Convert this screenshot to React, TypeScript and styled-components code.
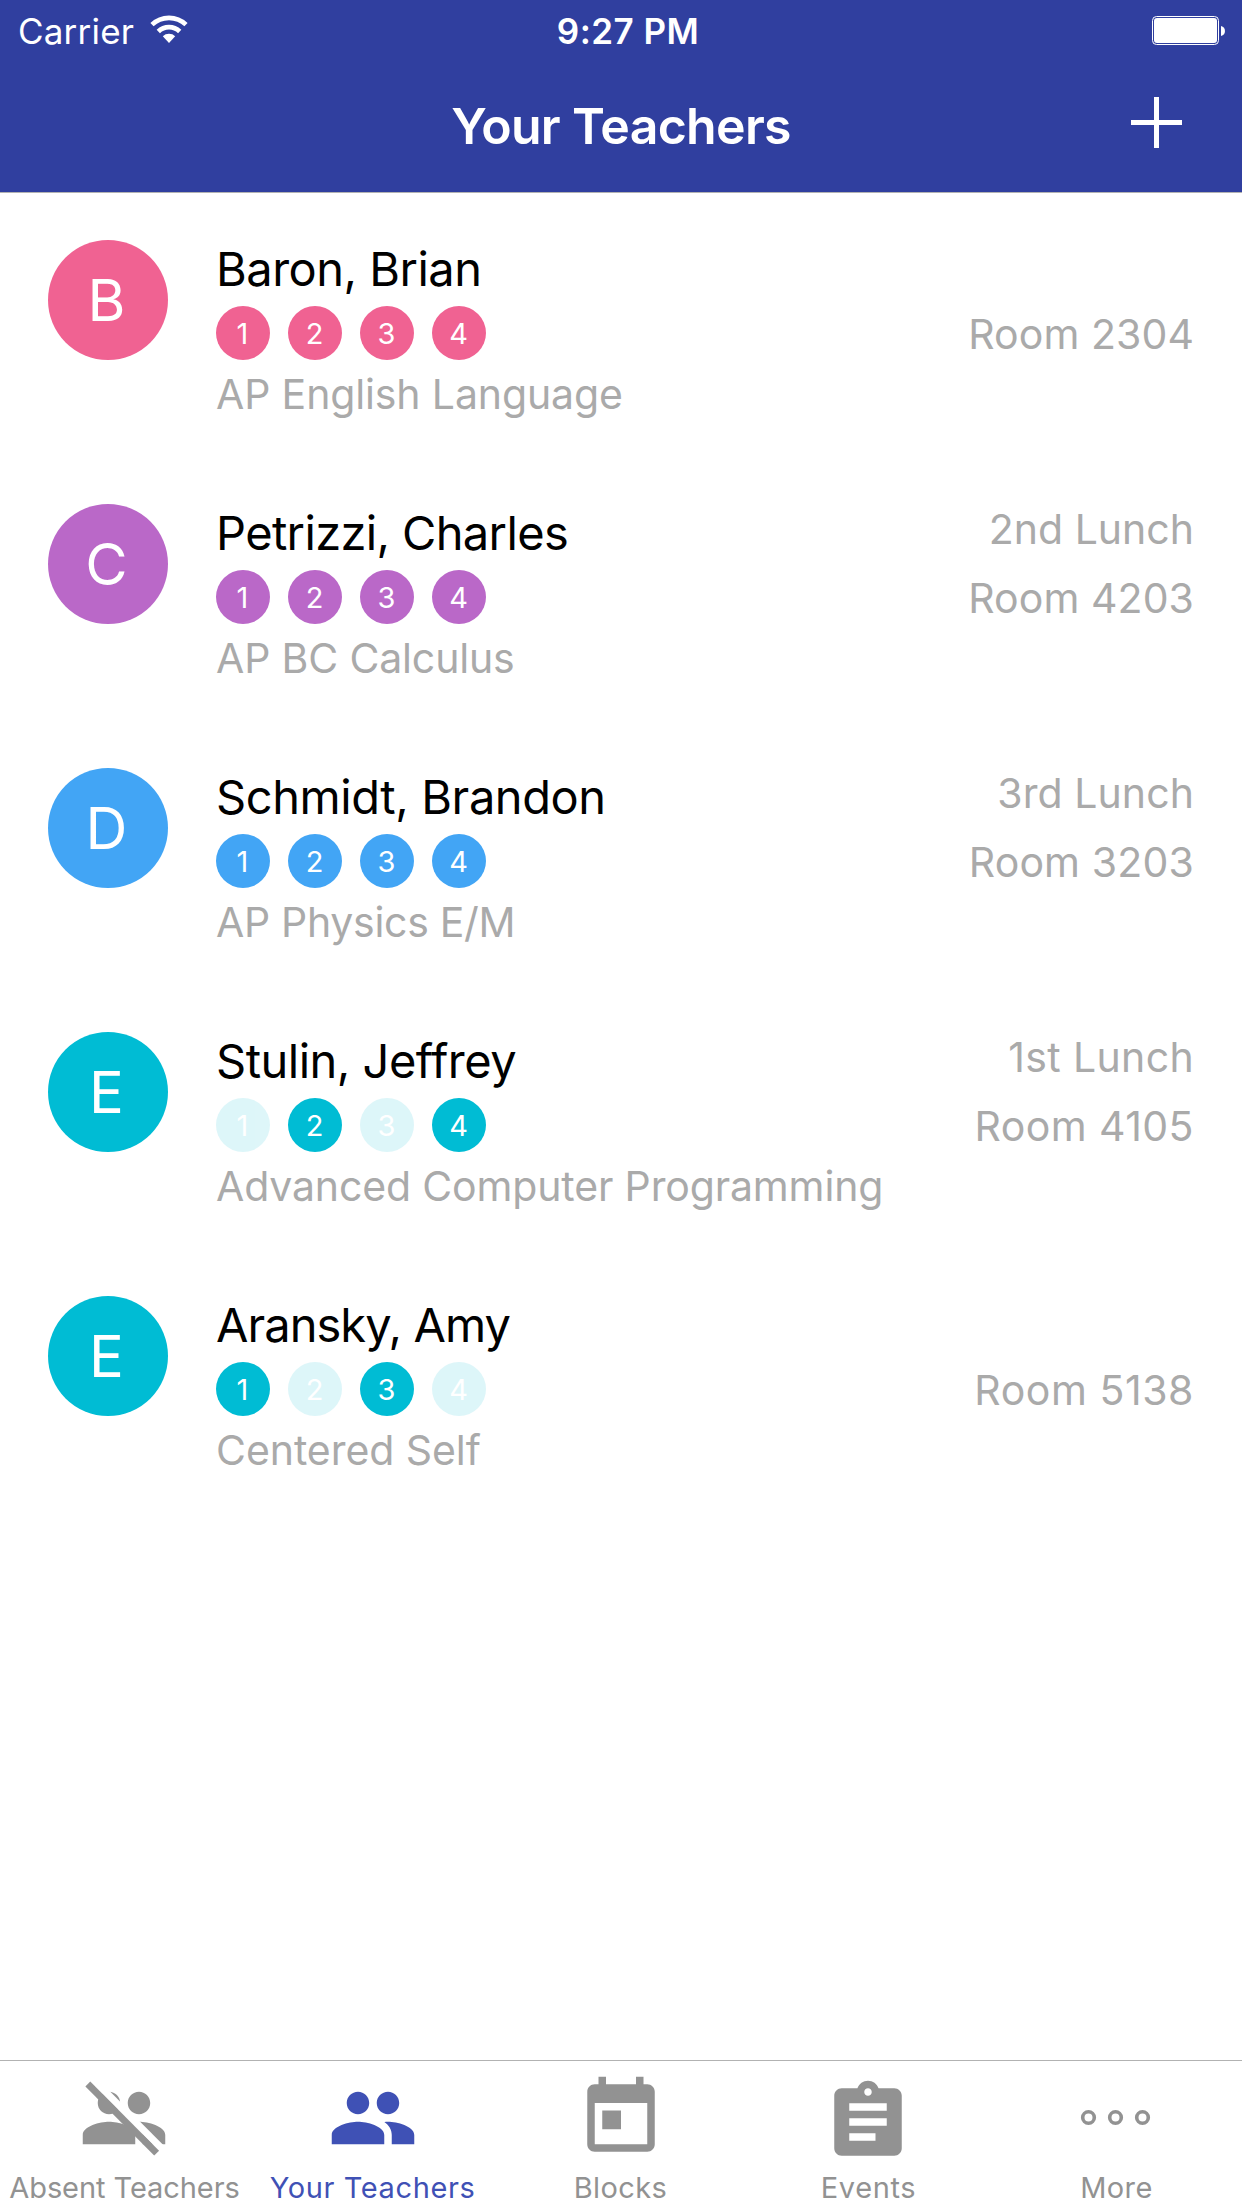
import React from "react";
import styled, { createGlobalStyle } from "styled-components";

const GlobalStyle = createGlobalStyle`
  * { box-sizing: border-box; }
  body { margin: 0; background: #fff; }
`;

const Screen = styled.div`
  display: flex;
  flex-direction: column;
  width: 1242px;
  height: 2208px;
  overflow: hidden;
  background: #fff;
  font-family: Inter, "Liberation Sans", sans-serif;
  white-space: nowrap;
`;

const Header = styled.header`
  height: 193px;
  background: #303f9f;
  border-bottom: 1px solid #b2b2b2;
  color: #fff;
`;

const StatusBar = styled.div`
  display: grid;
  grid-template-columns: 1fr auto 1fr;
  height: 62px;
  padding: 0 17px 0 18px;
  font-size: 35px;
  line-height: 62px;
`;

const Carrier = styled.div`
  display: flex;
  gap: 16px;
  letter-spacing: 0.2px;
  svg { margin-top: 15px; }
`;

const Clock = styled.div`
  margin-left: 13px;
  font-weight: 600;
  letter-spacing: 0.45px;
`;

const BatterySlot = styled.div`
  display: flex;
  justify-content: flex-end;
  padding-top: 16px;
`;

const NavBar = styled.div`
  display: grid;
  grid-template-columns: 1fr auto 1fr;
  height: 130px;
  padding: 0 60px;
`;

const Title = styled.h1`
  grid-column: 2;
  margin: 0;
  font-size: 50px;
  font-weight: 600;
  line-height: 128px;
  letter-spacing: -0.7px;
`;

const AddButton = styled.button`
  justify-self: end;
  align-self: start;
  width: 51px;
  height: 51px;
  margin-top: 35px;
  padding: 0;
  border: 0;
  background: none;
  color: inherit;
  svg { display: block; }
`;

const List = styled.main`
  flex: 1;
  margin-top: -1px;
`;

const Row = styled.section`
  display: flex;
  height: 264px;
  padding: 0 48px;
`;

const Avatar = styled.div<{ $color: string }>`
  width: 120px;
  height: 120px;
  margin: 48px 48px 0 0;
  padding-right: 3px;
  border-radius: 50%;
  background: ${(p) => p.$color};
  color: #fff;
  font-size: 58px;
  line-height: 120px;
  text-align: center;
`;

const Details = styled.div`
  flex: 1;
  padding-top: 48px;
`;

const Name = styled.div<{ $spacing: number }>`
  color: #000;
  font-size: 47px;
  line-height: 58px;
  letter-spacing: ${(p) => p.$spacing}px;
`;

const Blocks = styled.div`
  display: flex;
  gap: 18px;
  margin-top: 8px;
`;

const Block = styled.span<{ $color: string; $on: boolean }>`
  width: 54px;
  height: 54px;
  padding-right: 1px;
  border-radius: 50%;
  background: ${(p) => p.$color};
  opacity: ${(p) => (p.$on ? 1 : 0.13)};
  color: #fff;
  font-size: 29px;
  line-height: 55px;
  text-align: center;
`;

const Course = styled.div<{ $spacing: number }>`
  color: #aaa;
  font-size: 41px;
  line-height: 68px;
  letter-spacing: ${(p) => p.$spacing}px;
`;

const Side = styled.div`
  display: flex;
  flex-direction: column;
  justify-content: flex-end;
  height: 177px;
  color: #aaa;
  font-size: 41px;
  line-height: 69px;
  text-align: right;
`;

const SideLine = styled.div<{ $spacing: number }>`
  letter-spacing: ${(p) => p.$spacing}px;
`;

const TabBar = styled.nav`
  display: flex;
  height: 148px;
  border-top: 1px solid #b2b2b2;
`;

const Tab = styled.a<{ $active?: boolean }>`
  display: flex;
  flex-direction: column;
  align-items: center;
  width: 248px;
  padding-top: 12px;
  color: ${(p) => (p.$active ? "#3f51b5" : "#929292")};
`;

const TabIcon = styled.svg<{ $drop?: number; $shift?: number }>`
  width: 90px;
  height: 90px;
  flex: none;
  fill: currentColor;
  transform: translate(${(p) => p.$shift ?? 0}px, ${(p) => p.$drop ?? 0}px);
`;

const TabLabel = styled.span<{ $spacing: number }>`
  padding-left: 1px;
  font-size: 29px;
  line-height: 50px;
  letter-spacing: ${(p) => p.$spacing}px;
`;

const PEOPLE =
  "M16 11c1.66 0 2.99-1.34 2.99-3S17.66 5 16 5c-1.66 0-3 1.34-3 3s1.34 3 3 3zm-8 0c1.66 0 2.99-1.34 2.99-3S9.66 5 8 5C6.34 5 5 6.34 5 8s1.34 3 3 3zm0 2c-2.33 0-7 1.17-7 3.5V19h14v-2.5c0-2.33-4.67-3.5-7-3.5zm8 0c-.29 0-.62.02-.97.05 1.16.84 1.97 1.97 1.97 3.45V19h6v-2.5c0-2.33-4.67-3.5-7-3.5z";

const WifiIcon = () => (
  <svg width="38" height="29" viewBox="0 0 38 29" fill="none" stroke="#fff">
    <path d="M2 9.7a24.5 24.5 0 0 1 34 0" strokeWidth="4.6" />
    <path d="M8.3 16.4a15.6 15.6 0 0 1 21.4 0" strokeWidth="4.8" />
    <path d="M12.8 21.3a9 9 0 0 1 12.4 0L19 28z" fill="#fff" stroke="none" />
  </svg>
);

const BatteryIcon = () => (
  <svg width="73" height="29" viewBox="0 0 73 29">
    <rect x="0.5" y="0.5" width="66" height="28" rx="4" fill="none" stroke="#fff" />
    <rect x="2" y="2" width="63" height="25" rx="3" fill="#fff" />
    <path d="M69 10c5.300 1 5.300 9 0 10z" fill="#fff" />
  </svg>
);

const teachers = [
  { initial: "B", color: "#f06292", name: "Baron, Brian", ns: -0.5, on: [1, 2, 3, 4], course: "AP English Language", cs: -0.13, room: "Room 2304", rs: 0.08 },
  { initial: "C", color: "#ba68c8", name: "Petrizzi, Charles", ns: -0.64, on: [1, 2, 3, 4], course: "AP BC Calculus", cs: -0.15, lunch: "2nd Lunch", ls: 0, room: "Room 4203", rs: 0.08 },
  { initial: "D", color: "#42a5f5", name: "Schmidt, Brandon", ns: -0.41, on: [1, 2, 3, 4], course: "AP Physics E/M", cs: -0.3, lunch: "3rd Lunch", ls: 0.08, room: "Room 3203", rs: 0.15 },
  { initial: "E", color: "#00bcd4", name: "Stulin, Jeffrey", ns: -0.5, on: [2, 4], course: "Advanced Computer Programming", cs: -0.15, lunch: "1st Lunch", ls: 0.35, room: "Room 4105", rs: 0.45 },
  { initial: "E", color: "#00bcd4", name: "Aransky, Amy", ns: -0.95, on: [1, 3], course: "Centered Self", cs: -0.06, room: "Room 5138", rs: 0.55 },
];

export default function App() {
  return (
    <Screen>
      <GlobalStyle />
      <Header>
        <StatusBar>
          <Carrier>
            Carrier
            <WifiIcon />
          </Carrier>
          <Clock>9:27 PM</Clock>
          <BatterySlot>
            <BatteryIcon />
          </BatterySlot>
        </StatusBar>
        <NavBar>
          <Title>Your Teachers</Title>
          <AddButton aria-label="Add">
            <svg width="51" height="51" viewBox="0 0 51 51" fill="currentColor">
              <path d="M23 0h5v23h23v5H28v23h-5V28H0v-5h23z" />
            </svg>
          </AddButton>
        </NavBar>
      </Header>
      <List>
        {teachers.map((t) => (
          <Row key={t.name}>
            <Avatar $color={t.color}>{t.initial}</Avatar>
            <Details>
              <Name $spacing={t.ns}>{t.name}</Name>
              <Blocks>
                {[1, 2, 3, 4].map((n) => (
                  <Block key={n} $color={t.color} $on={t.on.includes(n)}>
                    {n}
                  </Block>
                ))}
              </Blocks>
              <Course $spacing={t.cs}>{t.course}</Course>
            </Details>
            <Side>
              {t.lunch && <SideLine $spacing={t.ls ?? 0}>{t.lunch}</SideLine>}
              <SideLine $spacing={t.rs}>{t.room}</SideLine>
            </Side>
          </Row>
        ))}
      </List>
      <TabBar>
        <Tab>
          <TabIcon viewBox="0 0 24 24">
            <path d={PEOPLE} />
            <path d="M3 2.300L21.300 20.700L24 20.700L5.700 2.300z" fill="#fff" />
            <path d="M3 2.270L1.700 3.600L20.050 22L21.350 20.700z" />
          </TabIcon>
          <TabLabel $spacing={-0.07}>Absent Teachers</TabLabel>
        </Tab>
        <Tab $active>
          <TabIcon viewBox="0 0 24 24" $shift={1}>
            <path d={PEOPLE} />
          </TabIcon>
          <TabLabel $spacing={0.6}>Your Teachers</TabLabel>
        </Tab>
        <Tab>
          <TabIcon viewBox="0 0 24 24" $shift={1}>
            <path d="M19 3h-1V1h-2v2H8V1H6v2H5c-1.110 0-1.990.9-1.990 2L3 19c0 1.100.890 2 2 2h14c1.100 0 2-.9 2-2V5c0-1.100-.9-2-2-2zm0 16H5V8h14v11zM7 10h5v5H7z" />
          </TabIcon>
          <TabLabel $spacing={0.4}>Blocks</TabLabel>
        </Tab>
        <Tab>
          <TabIcon viewBox="0 0 24 24" $drop={4}>
            <path d="M19 3h-4.180C14.400 1.840 13.300 1 12 1c-1.300 0-2.400.840-2.820 2H5c-1.100 0-2 .9-2 2v14c0 1.100.9 2 2 2h14c1.100 0 2-.9 2-2V5c0-1.100-.9-2-2-2zm-7 0c.550 0 1 .450 1 1s-.450 1-1 1-1-.450-1-1 .450-1 1-1zm2 14H7v-2h7v2zm3-4H7v-2h10v2zm0-4H7V7h10v2z" />
          </TabIcon>
          <TabLabel $spacing={0.6}>Events</TabLabel>
        </Tab>
        <Tab>
          <TabIcon viewBox="0 0 90 90">
            <g fill="none" stroke="currentColor" strokeWidth="3.6">
              <circle cx="17.500" cy="44.500" r="5.8" />
              <circle cx="44.500" cy="44.500" r="5.8" />
              <circle cx="71.500" cy="44.500" r="5.8" />
            </g>
          </TabIcon>
          <TabLabel $spacing={0.4}>More</TabLabel>
        </Tab>
      </TabBar>
    </Screen>
  );
}
